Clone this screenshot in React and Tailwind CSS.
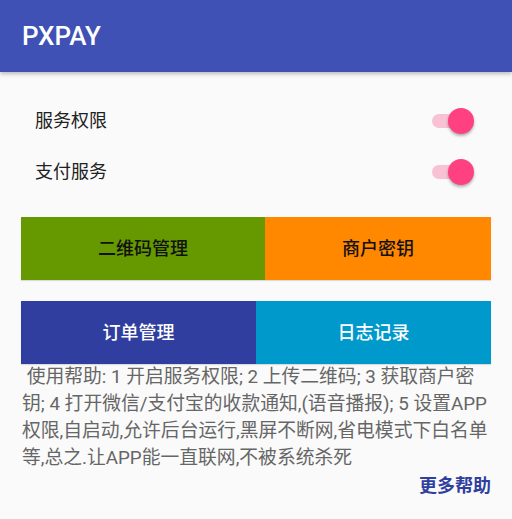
import React, { useState } from "react";

const font = { fontFamily: "Roboto, 'Noto Sans CJK SC', sans-serif" };

function Toggle({ on, onClick }) {
  return (
    <button type="button" onClick={onClick} className="relative w-[42px] h-[26px] flex items-center">
      <span className={"w-[40px] h-[14px] rounded-full " + (on ? "bg-[#F9C1D4]" : "bg-[#BDBDBD]")}></span>
      <span
        className={
          "absolute top-0 w-[26px] h-[26px] rounded-full shadow-[0_2px_3px_rgba(0,0,0,0.3)] " +
          (on ? "left-[16px] bg-[#FF4081]" : "left-0 bg-[#F1F1F1]")
        }
      ></span>
    </button>
  );
}

export default function App() {
  const [perm, setPerm] = useState(true);
  const [pay, setPay] = useState(true);

  return (
    <div className="w-[512px] h-[519px] bg-[#FAFAFA] overflow-hidden" style={font}>
      <div className="h-[72px] bg-[#3F51B5] px-[22px] flex items-center shadow-[0_2px_4px_rgba(0,0,0,0.25)] relative z-10">
        <span className="text-white text-[26px] font-medium">PXPAY</span>
      </div>

      <div className="px-[21px] pt-[23px]">
        <div className="h-[51px] flex items-center justify-between pl-[14px] pr-[17px]">
          <span className="text-[18px] text-[#212121]">服务权限</span>
          <Toggle on={perm} onClick={() => setPerm(!perm)} />
        </div>
        <div className="h-[51px] flex items-center justify-between pl-[14px] pr-[17px]">
          <span className="text-[18px] text-[#212121]">支付服务</span>
          <Toggle on={pay} onClick={() => setPay(!pay)} />
        </div>

        <div className="mt-[20px] h-[63px] flex shadow-[0_1px_1px_rgba(0,0,0,0.12)]">
          <button type="button" className="w-[244px] bg-[#669900] text-[18px] font-medium text-[#111]">
            二维码管理
          </button>
          <button type="button" className="flex-1 bg-[#FF8800] text-[18px] font-medium text-[#111]">
            商户密钥
          </button>
        </div>

        <div className="mt-[21px] h-[63px] flex shadow-[0_1px_1px_rgba(0,0,0,0.12)]">
          <button type="button" className="flex-1 bg-[#303F9F] text-[18px] font-medium text-white">
            订单管理
          </button>
          <button type="button" className="flex-1 bg-[#0099CC] text-[18px] font-medium text-white">
            日志记录
          </button>
        </div>

        <p className="pl-[1px] text-[18.8px] leading-[27px] text-[#666666] whitespace-pre-wrap">
          {" 使用帮助: 1 开启服务权限; 2 上传二维码; 3 获取商户密钥; 4 打开微信/支付宝的收款通知,(语音播报); 5 设置APP权限,自启动,允许后台运行,黑屏不断网,省电模式下白名单等,总之.让APP能一直联网,不被系统杀死"}
        </p>
        <div className="flex justify-end">
          <span className="text-[18px] leading-[27px] font-bold text-[#303F9F]">更多帮助</span>
        </div>
      </div>
    </div>
  );
}
